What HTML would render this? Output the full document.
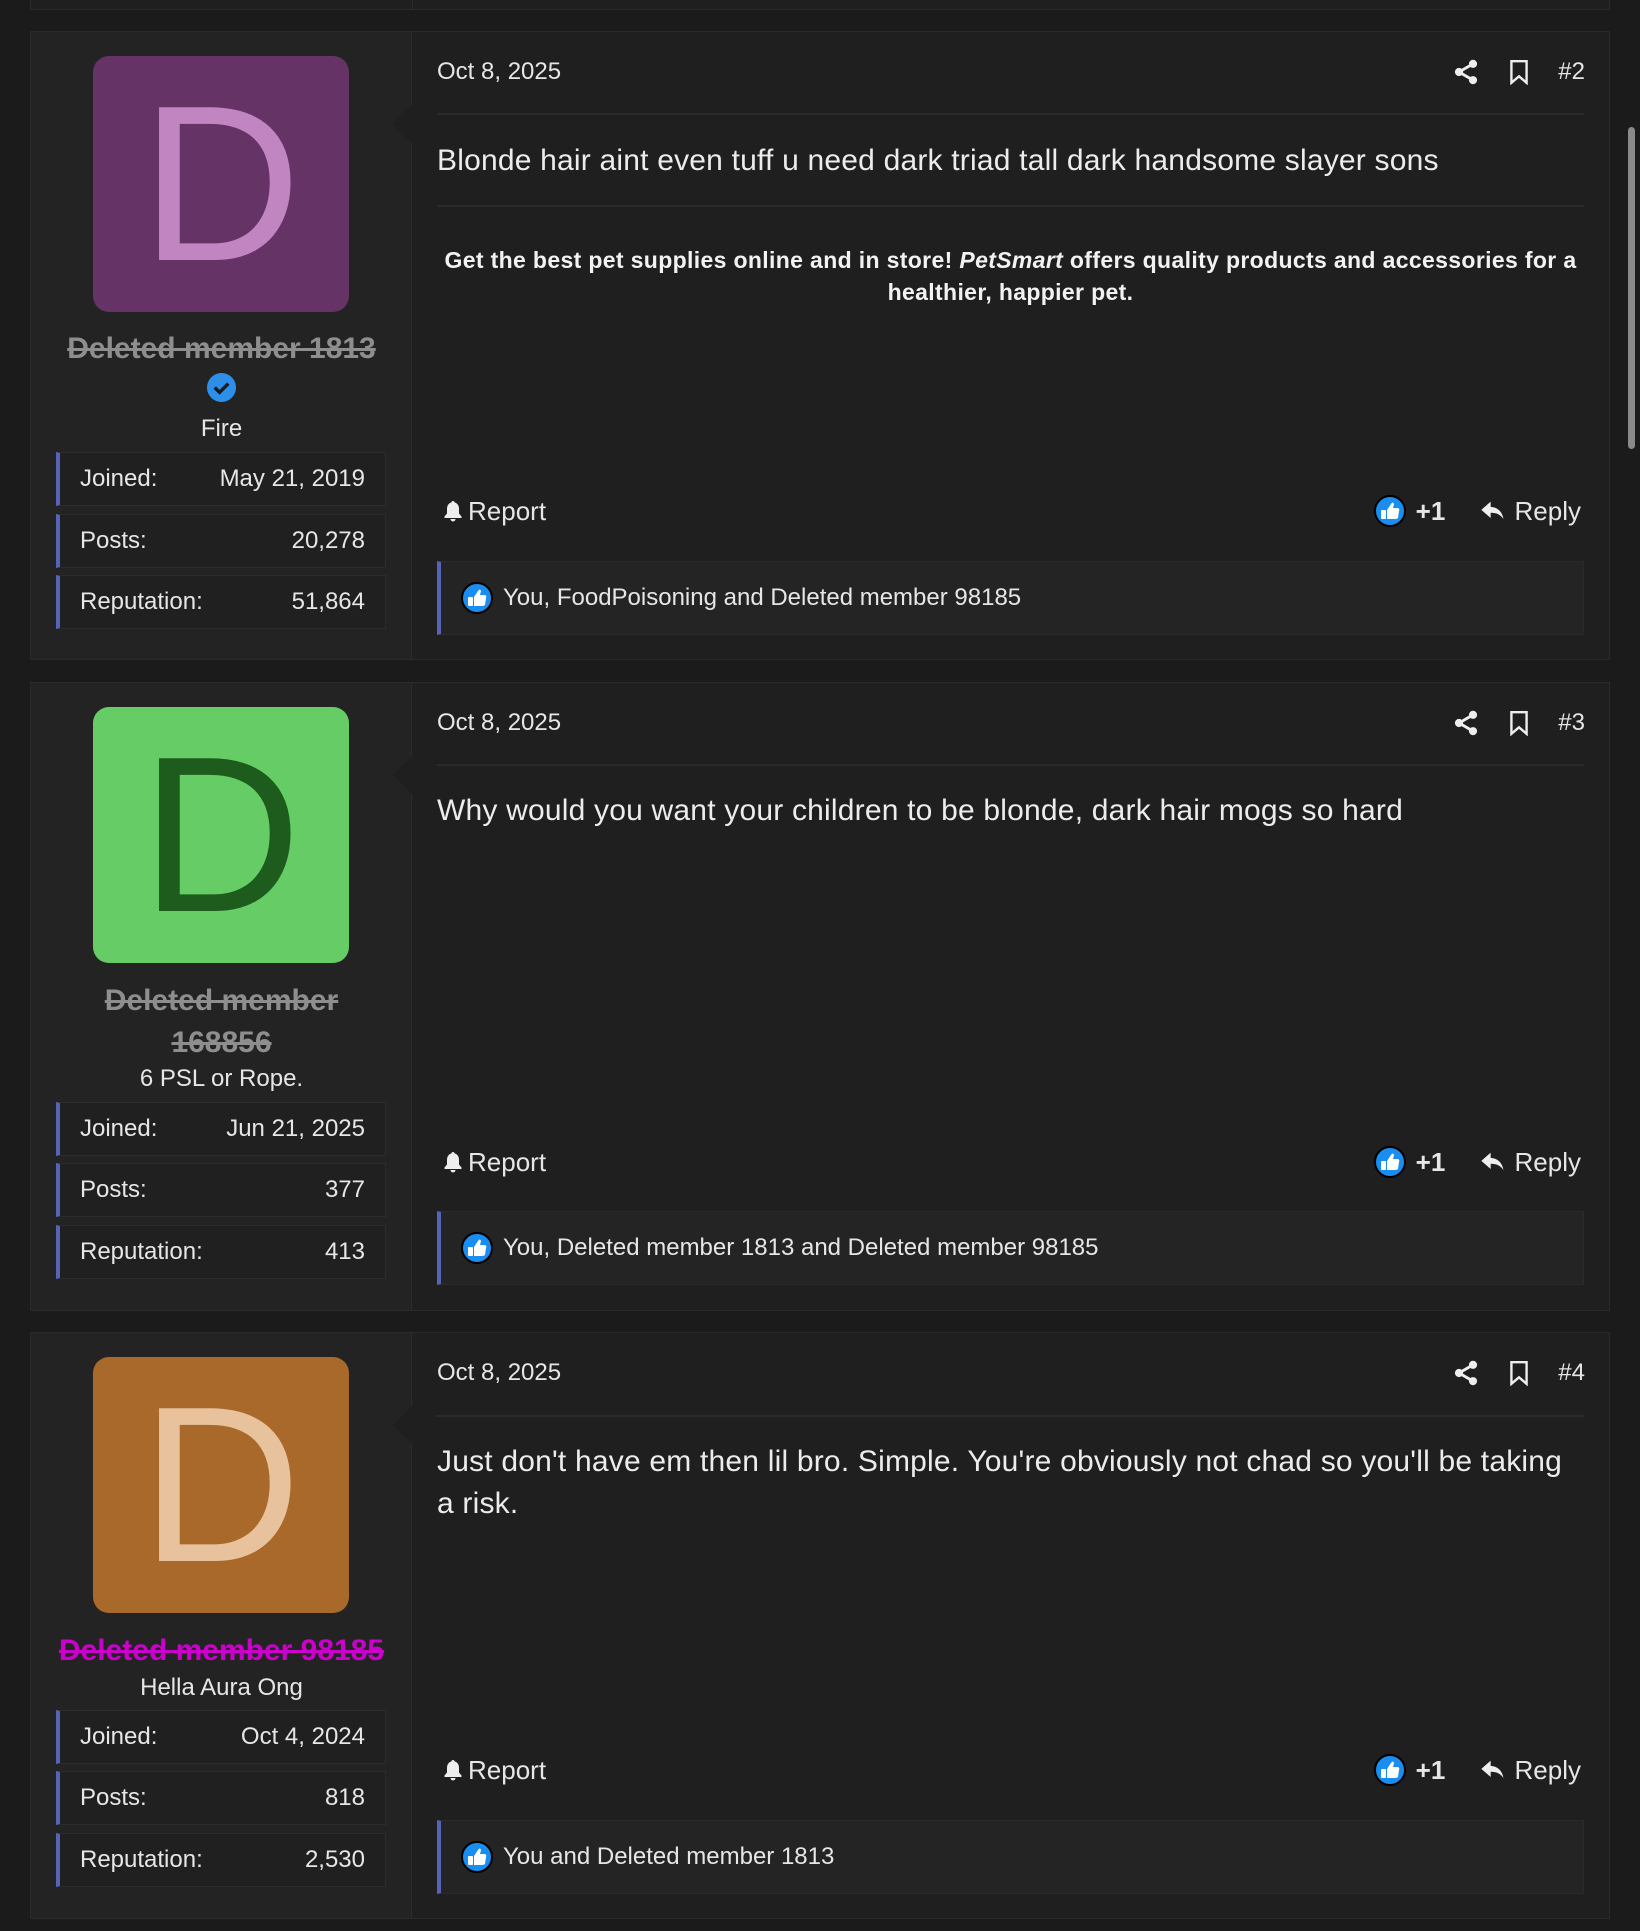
<!DOCTYPE html><html><head><meta charset="utf-8"><style>
*{margin:0;padding:0;box-sizing:border-box}
body{width:1640px;height:1931px;background:#1b1b1b;font-family:"Liberation Sans",sans-serif;color:#e6e6e6;position:relative;overflow:hidden}
.post{position:absolute;left:30px;width:1580px;border:1px solid #2a2a2a;background:#1f1f1f}
.side{position:absolute;left:0;top:0;bottom:0;width:381px;background:#232323;border-right:1px solid #2c2c2c}
.arrow{position:absolute;left:362px;top:72px;width:0;height:0;border-top:20px solid transparent;border-bottom:20px solid transparent;border-right:20px solid #1f1f1f}
.av{position:absolute;left:62px;top:24px;width:256px;height:256px;border-radius:16px;font-size:222px;line-height:256px;text-align:center;overflow:hidden}
.name{position:absolute;left:-10px;width:401px;text-align:center;font-weight:bold;font-size:30px;color:#8e8e8e;text-decoration:line-through;line-height:42px}
.title{position:absolute;left:0;width:381px;text-align:center;font-size:24px;color:#e6e6e6}
.stat{position:absolute;left:25px;width:330px;height:54px;border:1px solid #2c2c2c;border-left:4px solid #5664b8;background:#202020;font-size:24px;line-height:52px;padding:0 20px}
.stat span{float:right}
.date{position:absolute;left:406px;top:26px;font-size:24px;line-height:28px}
.hr{position:absolute;left:406px;width:1147px;height:2px;background:#2a2a2a}
.icons{position:absolute;right:24px;top:22px;height:36px;display:flex;align-items:center;gap:26px;font-size:24px}
.body{position:absolute;left:406px;width:1150px;font-size:30px;line-height:42px;color:#ececec;letter-spacing:0.2px}
.sig{position:absolute;left:406px;width:1147px;text-align:center;font-weight:bold;font-size:23px;line-height:32px;color:#f2f2f2;letter-spacing:0.35px}
.report{position:absolute;left:410px;font-size:26px;line-height:32px;display:flex;align-items:center;gap:3px}
.acts{position:absolute;right:28px;font-size:26px;line-height:32px;display:flex;align-items:center}
.reacts{position:absolute;left:406px;width:1147px;height:74px;background:#242424;border:1px solid #2a2a2a;border-left:4px solid #5664b8;font-size:24px;line-height:72px;padding-left:20px;display:flex;align-items:center;gap:10px}
</style></head><body>
<div style="position:absolute;left:30px;top:-2px;width:1580px;height:12px;border:1px solid #2a2a2a;background:#1f1f1f"><div style="position:absolute;left:381px;top:0;bottom:0;width:1px;background:#2c2c2c"></div></div>
<div style="position:absolute;left:1628px;top:127px;width:7px;height:322px;border-radius:4px;background:#8a8a8a"></div>

<svg width="0" height="0" style="position:absolute"><defs>
<symbol id="thumb" viewBox="0 0 32 32"><circle cx="16" cy="16" r="15" fill="#1a8ef0" stroke="#000" stroke-width="2"/><rect x="7" y="15" width="5" height="9" rx="1" fill="#fff"/><path d="M13 15 L17 9 Q19 6 20 9 L19 13 L24 13 Q26 14 25 16 L24 23 Q23 24 21 24 L13 24 Z" fill="#fff"/></symbol>
<symbol id="bell" viewBox="0 0 24 24"><path d="M12 2c1 0 1.5.7 1.5 1.4 3 .8 4.5 3.3 4.5 6.6v4.5l2.5 3v1.5h-17V17.5l2.5-3V10c0-3.3 1.5-5.8 4.5-6.6C10.5 2.7 11 2 12 2zM9.5 20h5a2.5 2.5 0 0 1-5 0z" fill="#eee"/></symbol>
<symbol id="share" viewBox="0 0 24 24"><circle cx="18" cy="5" r="3.5" fill="#eee"/><circle cx="6" cy="12" r="3.5" fill="#eee"/><circle cx="18" cy="19" r="3.5" fill="#eee"/><path d="M6 12L18 5M6 12l12 7" stroke="#eee" stroke-width="2.5"/></symbol>
<symbol id="bm" viewBox="0 0 24 24"><path d="M5 2h14v20l-7-6-7 6z" fill="none" stroke="#eee" stroke-width="2.2"/></symbol>
<symbol id="reply" viewBox="0 0 24 24"><path d="M10 4L2 11l8 7v-4.5c5 0 8.5 1.5 11 5.5-1-6-4.5-10-11-10.5z" fill="#eee"/></symbol>
</defs></svg>

<!-- POST 1 -->
<div class="post" style="top:31px;height:629px">
<div class="side">
<div class="av" style="background:#653366;color:#c185c2">D</div>
<div class="name" style="top:296px">Deleted member 1813</div>
<svg style="position:absolute;left:175px;top:340px" width="31" height="31" viewBox="0 0 32 32"><circle cx="16" cy="16" r="15" fill="#2d8fe8"/><path d="M9 16l5 5 9-9" stroke="#1b1b1b" stroke-width="3.5" fill="none"/></svg>
<div class="title" style="top:383px">Fire</div>
<div class="stat" style="top:420px">Joined:<span>May 21, 2019</span></div>
<div class="stat" style="top:482px">Posts:<span>20,278</span></div>
<div class="stat" style="top:543px">Reputation:<span>51,864</span></div>
</div>
<div class="arrow"></div>
<div class="date">Oct 8, 2025</div>
<div class="icons"><svg width="28" height="28"><use href="#share"/></svg><svg width="26" height="26"><use href="#bm"/></svg><span>#2</span></div>
<div class="hr" style="top:81px"></div>
<div class="body" style="top:108px">Blonde hair aint even tuff u need dark triad tall dark handsome slayer sons</div>
<div class="hr" style="top:173px"></div>
<div class="sig" style="top:212px">Get the best pet supplies online and in store! <i>PetSmart</i> offers quality products and accessories for a healthier, happier pet.</div>
<div class="report" style="top:463px"><svg width="24" height="26"><use href="#bell"/></svg>Report</div>
<div class="acts" style="top:463px"><svg width="32" height="32"><use href="#thumb"/></svg><b style="margin:0 34px 0 10px">+1</b><svg width="28" height="28"><use href="#reply"/></svg>&nbsp;Reply</div>
<div class="reacts" style="top:529px"><svg width="32" height="32"><use href="#thumb"/></svg>You, FoodPoisoning and Deleted member 98185</div>
</div>

<!-- POST 2 -->
<div class="post" style="top:682px;height:629px">
<div class="side">
<div class="av" style="background:#66cc66;color:#1e5c1e">D</div>
<div class="name" style="top:297px">Deleted member<br>168856</div>
<div class="title" style="top:382px">6 PSL or Rope.</div>
<div class="stat" style="top:419px">Joined:<span>Jun 21, 2025</span></div>
<div class="stat" style="top:480px">Posts:<span>377</span></div>
<div class="stat" style="top:542px">Reputation:<span>413</span></div>
</div>
<div class="arrow"></div>
<div class="date">Oct 8, 2025</div>
<div class="icons"><svg width="28" height="28"><use href="#share"/></svg><svg width="26" height="26"><use href="#bm"/></svg><span>#3</span></div>
<div class="hr" style="top:81px"></div>
<div class="body" style="top:107px">Why would you want your children to be blonde, dark hair mogs so hard</div>
<div class="report" style="top:463px"><svg width="24" height="26"><use href="#bell"/></svg>Report</div>
<div class="acts" style="top:463px"><svg width="32" height="32"><use href="#thumb"/></svg><b style="margin:0 34px 0 10px">+1</b><svg width="28" height="28"><use href="#reply"/></svg>&nbsp;Reply</div>
<div class="reacts" style="top:528px"><svg width="32" height="32"><use href="#thumb"/></svg>You, Deleted member 1813 and Deleted member 98185</div>
</div>

<!-- POST 3 -->
<div class="post" style="top:1332px;height:587px">
<div class="side">
<div class="av" style="background:#a9692a;color:#e8c29c">D</div>
<div class="name" style="top:297px;color:#cc00cc">Deleted member 98185</div>
<div class="title" style="top:341px">Hella Aura Ong</div>
<div class="stat" style="top:377px">Joined:<span>Oct 4, 2024</span></div>
<div class="stat" style="top:438px">Posts:<span>818</span></div>
<div class="stat" style="top:500px">Reputation:<span>2,530</span></div>
</div>
<div class="arrow"></div>
<div class="date">Oct 8, 2025</div>
<div class="icons"><svg width="28" height="28"><use href="#share"/></svg><svg width="26" height="26"><use href="#bm"/></svg><span>#4</span></div>
<div class="hr" style="top:82px"></div>
<div class="body" style="top:108px">Just don't have em then lil bro. Simple. You're obviously not chad so you'll be taking a risk.</div>
<div class="report" style="top:421px"><svg width="24" height="26"><use href="#bell"/></svg>Report</div>
<div class="acts" style="top:421px"><svg width="32" height="32"><use href="#thumb"/></svg><b style="margin:0 34px 0 10px">+1</b><svg width="28" height="28"><use href="#reply"/></svg>&nbsp;Reply</div>
<div class="reacts" style="top:487px"><svg width="32" height="32"><use href="#thumb"/></svg>You and Deleted member 1813</div>
</div>
</body></html>
